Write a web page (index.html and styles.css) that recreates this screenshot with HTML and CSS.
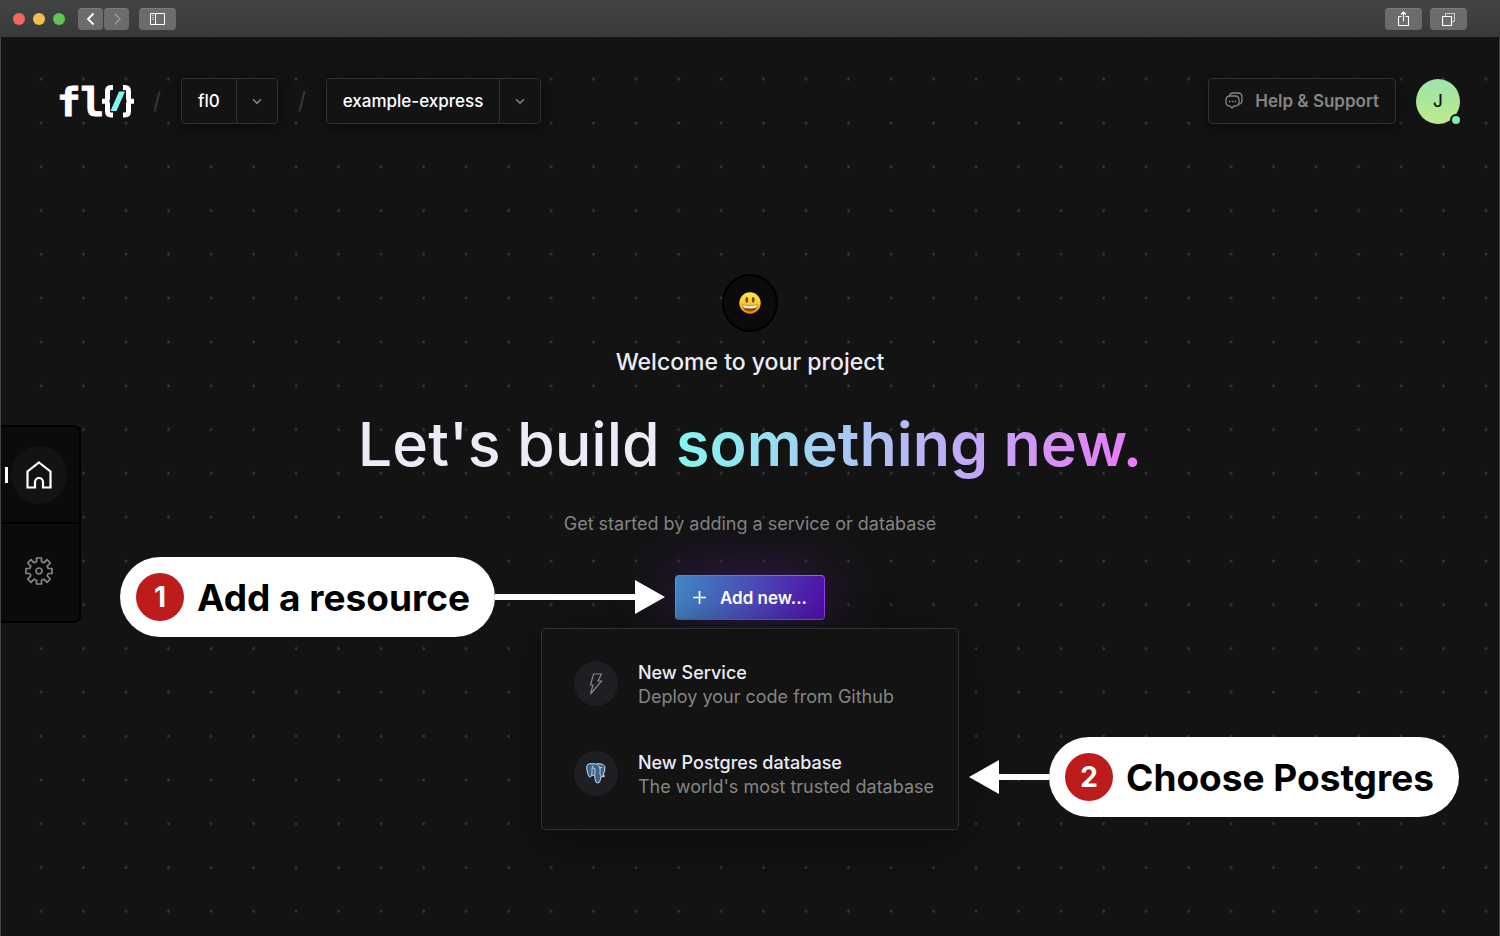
FILE: index.html
```html
<!DOCTYPE html>
<html lang="en">
<head>
<meta charset="utf-8">
<title>fl0 - example-express</title>
<link rel="stylesheet" href="styles.css">
</head>
<body>
<div class="window">
  <div class="titlebar">
    <div class="lights"><span class="light red"></span><span class="light yellow"></span><span class="light green"></span></div>
    <div class="nav-buttons">
      <button class="chrome-btn small" aria-label="Back"><svg width="10" height="14" viewBox="0 0 10 14"><path d="M7.5 1.5 2 7l5.500 5.500" fill="none" stroke="#fff" stroke-width="1.800"/></svg></button>
      <button class="chrome-btn small" aria-label="Forward"><svg width="10" height="14" viewBox="0 0 10 14"><path d="M2.500 1.500 8 7l-5.500 5.500" fill="none" stroke="#969696" stroke-width="1.600"/></svg></button>
    </div>
    <button class="chrome-btn" aria-label="Toggle sidebar"><svg width="15" height="12" viewBox="0 0 15 12"><path d="M.5.5h14v11H.5zM5.500.5v11" fill="none" stroke="#fff"/><path d="M2 2.500h2M2 4.500h2M2 6.500h2" stroke="#bbb"/></svg></button>
    <div class="chrome-right">
      <button class="chrome-btn" aria-label="Share"><svg width="13" height="16" viewBox="0 0 13 16"><path d="M4.500 5.500h-3v9h10v-9h-3M6.500 10.500V1.500M4 3.500 6.500 1 9 3.500" fill="none" stroke="#fff" stroke-width="1.100"/></svg></button>
      <button class="chrome-btn" aria-label="Show tabs"><svg width="13" height="13" viewBox="0 0 13 13"><path d="M3.500 3.500v-3h9v8h-3" fill="none" stroke="#d0d0d0"/><path d="M.5 3.500h9v9h-9z" fill="none" stroke="#fff" stroke-width="1.200"/></svg></button>
    </div>
  </div>

  <div class="page">
    <svg class="dots" aria-hidden="true"><defs><pattern id="grid" x="18.800" y="20.300" width="42.500" height="43.800" patternUnits="userSpaceOnUse"><circle cx="21.300" cy="21.900" r="1.400" fill="#383838"/></pattern></defs><rect width="100%" height="100%" fill="url(#grid)"/></svg>

    <header class="header">
      <a class="logo" href="#" aria-label="fl0 home"><span class="logo-text">fl</span><svg width="32" height="33" viewBox="0 0 32 33"><path d="M11 2.500H9Q5.500 2.500 5.500 6v7q0 3-2 3.300 2 .3 2 3.300v7q0 3.400 3.500 3.400h2" fill="none" stroke="#fff" stroke-width="5"/><path d="M0 13.800h4v5H0zM28 13.800h4v5h-4z" fill="#fff"/><path d="M21 2.500h2q3.500 0 3.500 3.500v7q0 3 2 3.300-2 .3-2 3.300v7q0 3.400-3.500 3.400h-2" fill="none" stroke="#fff" stroke-width="5"/><path d="M17 6.500h6L14.500 26h-6z" fill="#83f7ee"/></svg></a>
      <svg class="slash" width="8" height="21" viewBox="0 0 8 21"><path d="M1.500 20.500 6.500.5" stroke="#343434" stroke-width="2.200"/></svg>
      <div class="picker"><button class="picker-name">fl0</button><button class="picker-arrow" aria-label="Choose workspace"><svg width="10" height="7" viewBox="0 0 10 7"><path d="m1 1.200 4 4 4-4" fill="none" stroke="#8a8a8a" stroke-width="1.400"/></svg></button></div>
      <svg class="slash" width="8" height="21" viewBox="0 0 8 21"><path d="M1.500 20.500 6.500.5" stroke="#343434" stroke-width="2.200"/></svg>
      <div class="picker"><button class="picker-name">example-express</button><button class="picker-arrow" aria-label="Choose project"><svg width="10" height="7" viewBox="0 0 10 7"><path d="m1 1.200 4 4 4-4" fill="none" stroke="#8a8a8a" stroke-width="1.400"/></svg></button></div>
      <button class="help"><svg width="18" height="18" viewBox="0 0 18 18" fill="none" stroke="#858585" stroke-width="1.300" stroke-linejoin="round"><path d="M4.500 3.800Q5.200 1 8 1h5q4 0 4 4v3.500q0 3.200-3 3.700"/><path d="M5 4h5q4 0 4 4v2q0 4-4 4H9l-2 2-2-2q-4 0-4-4V8q0-4 4-4z"/><path d="M4 9.500h1.500M6.800 9.500h1.500M9.600 9.500h1.500" stroke-width="1.500"/></svg>Help &amp; Support</button>
      <button class="avatar">J<span class="status"></span></button>
    </header>

    <div class="content">
      <nav class="sidebar">
        <a class="side-item active" href="#" aria-label="Home"><svg width="28" height="30" viewBox="0 0 28 30"><path d="M14 2.500 25.500 11.500V27.500H18V22a4 4 0 0 0-8 0v5.500H2.500v-16z" fill="none" stroke="#fff" stroke-width="2.200"/></svg></a>
        <a class="side-item" href="#" aria-label="Settings"><svg width="30" height="30" viewBox="-15 -15 30 30"><path d="M-2.500-13h5v3.800l2.400 1L8-11.300 11.300-8 8.200-4.900l1 2.400H13v5H9.200l-1 2.400L11.300 8 8 11.300 4.900 8.200l-2.400 1V13h-5V9.200l-2.400-1L-8 11.300-11.300 8l3.100-3.100-1-2.400H-13v-5h3.800l1-2.400L-11.300-8-8-11.300l3.100 3.100 2.400-1z" fill="none" stroke="#858585" stroke-width="1.700" stroke-linejoin="round"/><circle r="3" fill="none" stroke="#858585" stroke-width="1.700"/></svg></a>
      </nav>

      <main class="hero">
        <div class="emoji"><svg width="22" height="22" viewBox="0 0 22 22"><defs><linearGradient id="face" x2="0" y2="1"><stop offset="0" stop-color="#ffe94d"/><stop offset=".55" stop-color="#fdc52c"/><stop offset="1" stop-color="#ee8a12"/></linearGradient></defs><circle cx="11" cy="11" r="10.700" fill="url(#face)"/><ellipse cx="7.800" cy="7.800" rx="1.400" ry="2.900" fill="#6a4309"/><ellipse cx="14.200" cy="7.800" rx="1.400" ry="2.900" fill="#6a4309"/><path d="M3.500 12.500q7.500 1.500 15 0-.5 7-7.500 7t-7.500-7z" fill="#8a4c08"/><path d="M4 13q7 1.300 14 0-.2 2.300-1.300 3-5.700.8-11.400 0Q4.200 15.300 4 13z" fill="#f6f2e8"/></svg></div>
        <p class="welcome">Welcome to your project</p>
        <h1 class="title">Let's build <span class="gradient">something new.</span></h1>
        <p class="subtitle">Get started by adding a service or database</p>
        <div class="action">
          <button class="add"><svg width="13" height="13" viewBox="0 0 13 13"><path d="M6.500 0v13M0 6.500h13" stroke="#fff" stroke-width="1.700"/></svg>Add new...</button>
          <div class="callout callout-one"><div class="pill"><span class="num">1</span>Add a resource</div><span class="line"></span><svg width="30" height="34" viewBox="0 0 30 34"><path d="m0 0 30 17L0 34z" fill="#fff"/></svg></div>
        </div>
        <div class="menu">
          <a class="option" href="#">
            <span class="option-icon"><svg width="14" height="22" viewBox="0 0 14 22"><path d="M4.500 1h8L9 8h3.500L1.500 21 4 12H1.500z" fill="none" stroke="#858585" stroke-width="1.200"/></svg></span>
            <span class="option-text"><strong>New Service</strong><span>Deploy your code from Github</span></span>
          </a>
          <a class="option" href="#">
            <span class="option-icon"><svg width="20" height="21" viewBox="0 0 20 21"><path d="M6 .8Q3.500.2 1.700 1.500.4 2.700.8 6q.7 5.500 2.400 7.700 1 1 2.300-.7l1.200-.8 2 .5.3 3q.3 4.300 2.500 4.300 2.700 0 2.900-3.500l.4-2.800q2.500.6 4-.7l-2-.7Q19.500 8 18.800 3.500 17.500.5 13.500.8 11.500.3 10 1.200 8 .3 6 .8z" fill="#38658f" stroke="#d5dce3" stroke-width="1"/><path d="M7 2.500Q5.500 5 6 8.500q.2 2-.5 4M6.500 5.200Q9 4.500 9 6.500l-.2 5.700M11.500 1.500q2 1.800 2.500 4.200.3 3.300-.2 4.500l1 2.400M16 4.500q-2-.7-2 1" fill="none" stroke="#d5dce3" stroke-width=".9"/></svg></span>
            <span class="option-text"><strong>New Postgres database</strong><span>The world's most trusted database</span></span>
          </a>
          <div class="callout callout-two"><svg width="30" height="34" viewBox="0 0 30 34"><path d="M30 0 0 17l30 17z" fill="#fff"/></svg><span class="line"></span><div class="pill"><span class="num">2</span>Choose Postgres</div></div>
        </div>
      </main>
    </div>
  </div>
</div>
</body>
</html>
```
FILE: styles.css
```css
* { box-sizing: border-box; }
body { margin: 0; font-family: Inter, "Liberation Sans", sans-serif; background: #131313; color: #ecebf8; }
button { font: inherit; color: inherit; margin: 0; padding: 0; border: 0; background: none; }
a { color: inherit; text-decoration: none; }
p, h1 { margin: 0; }
svg { display: block; flex: none; }

.window { min-height: 100vh; display: flex; flex-direction: column; overflow: hidden; }
.titlebar { height: 37px; padding: 0 33px 0 13px; display: flex; align-items: center; background: linear-gradient(#434544, #383a39); }
.lights { display: flex; gap: 8px; margin-right: 13px; }
.light { width: 12px; height: 12px; border-radius: 50%; }
.red { background: #ee6a5f; }
.yellow { background: #f5bd4f; }
.green { background: #61c454; }
.nav-buttons { display: flex; gap: 1px; margin-right: 10px; }
.chrome-btn { width: 37px; height: 22px; display: flex; align-items: center; justify-content: center; border-radius: 4px; background: #6c6c6c; border-top: 1px solid #7b7b7b; }
.chrome-btn.small { width: 25px; }
.chrome-right { display: flex; gap: 8px; margin-left: auto; }

.page { position: relative; flex: 1; display: flex; flex-direction: column; border: 1px solid #434544; border-width: 0 1px; }
.dots { position: absolute; top: 0; left: 0; width: 100%; height: 100%; }
.header { position: relative; display: flex; align-items: center; padding: 41px 39px 0 56px; font-size: 17px; font-weight: 500; }
.logo { display: flex; align-items: center; margin-right: 19px; color: #fff; }
.logo-text { width: 45px; padding-top: 3px; font: bold 39px/40px "DejaVu Sans Mono", monospace; -webkit-text-stroke: 1px #fff; }
.slash { margin-right: 20px; }
.picker, .help { height: 46px; display: flex; border: 1px solid #303030; border-radius: 4px; background: #131313; box-shadow: 0 4px 14px #0a0a0a; }
.picker { margin-right: 20px; color: #fff; }
.picker-name { padding: 0 16px; border-right: 1px solid #303030; }
.picker-arrow { width: 40px; display: flex; align-items: center; justify-content: center; }
.help { margin-left: auto; padding: 0 16px; align-items: center; gap: 12px; color: #858585; font-weight: 600; }
.avatar { position: relative; width: 44px; height: 45px; margin-left: 20px; border-radius: 50%; background: linear-gradient(#9be5a9, #bfe98d); color: #131313; }
.status { position: absolute; right: -2px; bottom: -2px; width: 12px; height: 12px; border-radius: 50%; border: 2px solid #131313; background: #83eca8; }

.content { position: relative; flex: 1; display: grid; grid-template-columns: 80px 1fr 80px; padding-bottom: 12px; }
.sidebar { align-self: center; background: #0b0b0b; border: 2px solid #000; border-left: 0; border-radius: 0 7px 7px 0; }
.side-item { position: relative; height: 97px; padding: 0 2px 3px 0; display: flex; align-items: center; justify-content: center; }
.side-item.active { padding-bottom: 0; border-bottom: 2px solid #000; }
.side-item.active svg { box-sizing: content-box; padding: 14px; border-radius: 50%; background: #131313; overflow: visible; }
.side-item.active::before { content: ""; position: absolute; left: 4px; width: 3px; height: 16px; background: #fff; }

.hero { display: flex; flex-direction: column; align-items: center; padding-top: 150px; white-space: nowrap; }
.emoji { width: 56px; height: 58px; display: flex; align-items: center; justify-content: center; border: 2px solid #000; border-radius: 50%; background: #0b0b0b; }
.welcome { margin-top: 14px; font-size: 23px; line-height: 32px; font-weight: 500; }
.title { margin-top: 26px; font-size: 61px; line-height: 80px; font-weight: 500; }
.gradient { font-weight: 600; background: linear-gradient(90deg, #83f7ee, #e879f9); -webkit-background-clip: text; background-clip: text; color: transparent; }
.subtitle { margin-top: 28px; font-size: 18px; line-height: 24px; color: #858585; }
.action { position: relative; margin-top: 39px; }
.add { min-width: 150px; height: 45px; padding: 0 16px; display: flex; align-items: center; justify-content: center; gap: 14px; border: 1px solid #6f55dc; border-color: #5c81d4 #943cec #7d4adf #4ba3cb; border-radius: 4px; background: linear-gradient(100deg, #4087c1, #4a4bb5 50%, #4f0ea9); box-shadow: 0 0 60px #3b1a5c; color: #fff; font-size: 17px; font-weight: 600; }
.menu { position: relative; min-width: 418px; margin-top: 8px; padding: 32px 24px 30px 32px; display: grid; gap: 42px; border: 1px solid #303030; border-radius: 4px; background: #131313; box-shadow: 0 12px 40px #0c0c0c; }
.option { display: flex; align-items: flex-start; gap: 20px; font-size: 18px; line-height: 24px; }
.option-icon { width: 44px; height: 45px; display: flex; align-items: center; justify-content: center; border-radius: 50%; background: #1e1f23; }
.option-text { display: flex; flex-direction: column; color: #858585; }
.option-text strong { font-weight: 500; color: #ecebf8; }

.callout { position: absolute; z-index: 1; display: flex; align-items: center; }
.callout-one { right: calc(100% + 10px); top: -18px; }
.callout-two { left: calc(100% + 11px); bottom: 12px; }
.pill { height: 80px; padding: 0 25px 0 16px; display: flex; align-items: center; gap: 13px; border-radius: 40px; background: #fff; color: #000; font-size: 37px; font-weight: 700; }
.num { width: 48px; height: 48px; display: flex; align-items: center; justify-content: center; border-radius: 50%; background: #bd1c1d; color: #fff; font-size: 28px; }
.line { height: 6px; background: #fff; }
.callout-one .line { width: 140px; }
.callout-two .line { width: 50px; }
```
